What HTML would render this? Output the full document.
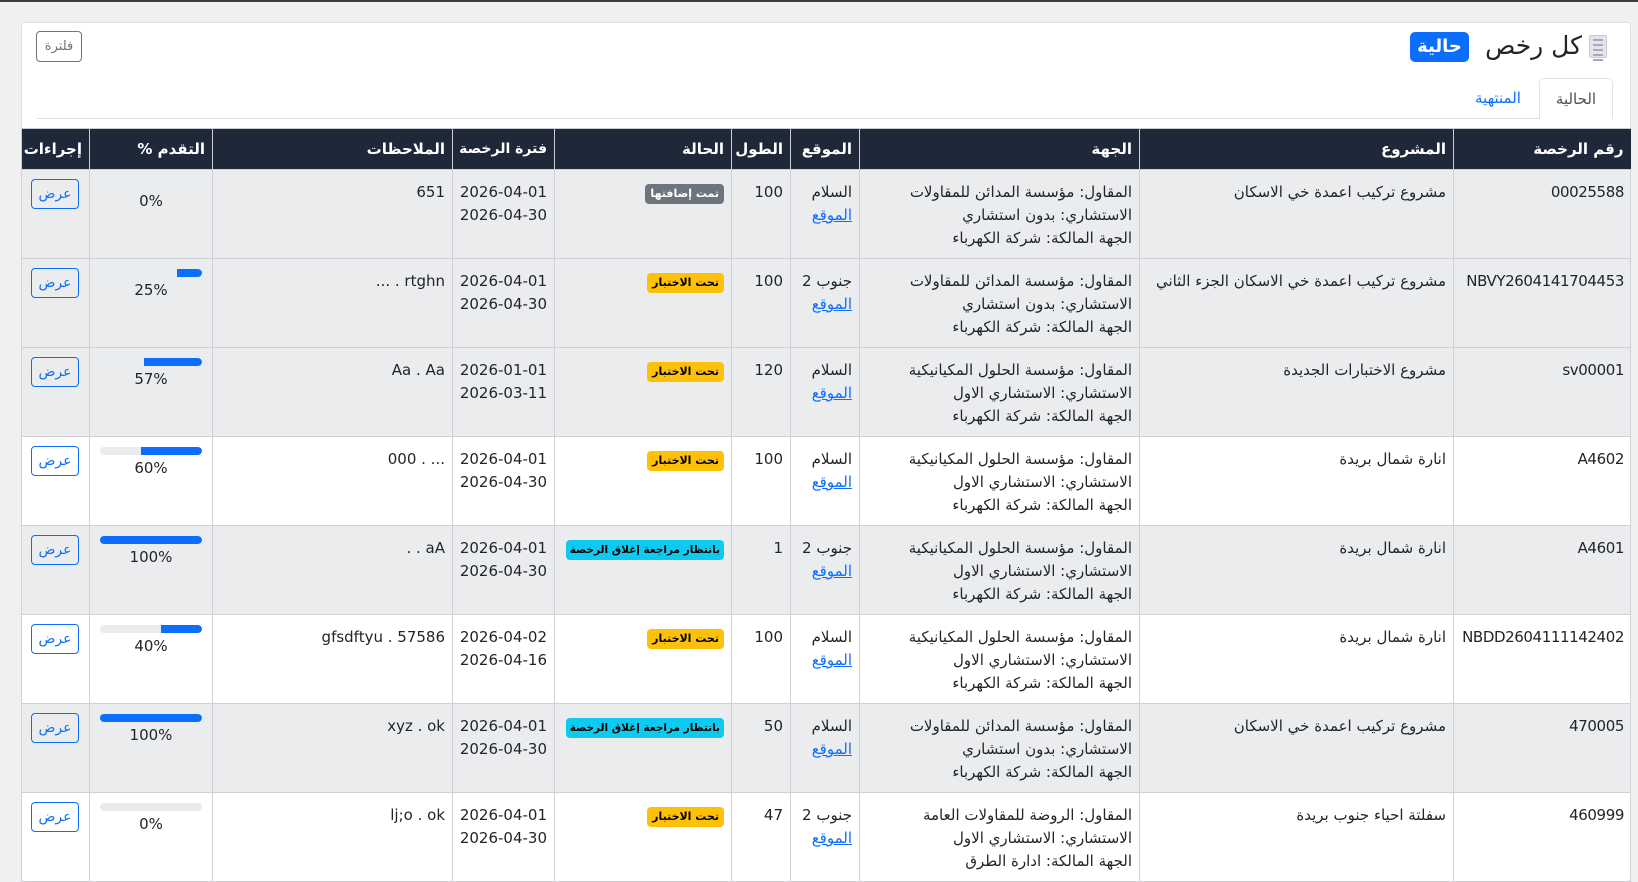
<!DOCTYPE html>
<html dir="rtl"><head><meta charset="utf-8"><style>
*{box-sizing:border-box;margin:0;padding:0}
body{width:1638px;height:865px;overflow:hidden;background:#f0f0f0;font-family:"DejaVu Sans","Liberation Sans",sans-serif;color:#212529;font-size:15px;position:relative}
.topline{position:absolute;left:0;top:0;width:1638px;height:2px;background:#3a3d42}
.card{position:absolute;left:21px;top:22px;width:1610px;height:860px;background:#fff;border:1px solid #dee2e6;border-radius:4px}
.title{position:absolute;right:56px;top:29px;font-size:25px;line-height:34px;color:#212529}
.icon{position:absolute;left:1589px;top:35px;width:18px;height:23px;background:#e4e3ee;border:1px solid #c9c8d9;border-radius:2px}
.icon i{display:block;height:2px;background:#a9a8ba;margin:3px 3px 0}
.hbadge{position:absolute;left:1410px;top:32px;width:59px;height:30px;background:#0d6efd;color:#fff;font-weight:bold;font-size:18px;border-radius:5px;text-align:center;line-height:30px}
.filter{position:absolute;left:36px;top:31px;width:46px;height:31px;border:1px solid #6c757d;border-radius:4px;color:#6c757d;font-size:13px;text-align:center;line-height:29px}
.tabline{position:absolute;left:37px;top:118px;width:1576px;height:1px;background:#dee2e6}
.tab{position:absolute;left:1539px;top:78px;width:74px;height:41px;border:1px solid #dee2e6;border-bottom:1px solid #fff;border-radius:5px 5px 0 0;background:#fff;text-align:center;line-height:40px;font-size:15px;color:#495057}
.tab2{position:absolute;left:1466px;top:78px;width:64px;height:40px;text-align:center;line-height:40px;font-size:15px;color:#0d6efd}
table{position:absolute;left:21px;top:128px;width:1609px;border-collapse:collapse;table-layout:fixed}
th{background:#1f2839;color:#fff;font-weight:bold;font-size:15px;height:41px;text-align:right;padding:0 7px;border-left:1px solid #c9cdd2;border-top:1px solid #c9cdd2;white-space:nowrap;overflow:hidden}
td{height:89px;vertical-align:top;text-align:right;padding:11px 7px 0;border:1px solid #cfd1d4;line-height:23px;font-size:15px;white-space:nowrap;overflow:hidden}
td.n{letter-spacing:-0.4px;padding-right:6px;padding-left:2px}
tr.g td{background:#ebecee}
a{color:#0d6efd;text-decoration:underline}
.b{display:inline-block;font-size:11px;font-weight:bold;border-radius:4px;padding:0 5px;line-height:20px;margin-top:1px}
.bs{background:#6c757d;color:#fff}.bw{background:#ffc107;color:#000}.bi{background:#0dcaf0;color:#000;font-size:10.5px;padding:0 4px}
.pr{height:8px;background:#e9ecef;border-radius:4px;margin:1px 2px 0;position:relative;overflow:hidden}
.pr i{position:absolute;right:0;top:0;height:8px;background:#0d6efd;border-radius:0 4px 4px 0}
.pt{text-align:center;margin-top:2px}
.btn{display:inline-block;width:48px;height:30px;border:1px solid #0d6efd;color:#0d6efd;border-radius:4px;text-align:center;line-height:28px;font-size:14px}
td.ac{padding:9px 2px 0 9px;text-align:left}
td.pc{padding:9px 8px 0}
</style></head><body>
<div class="topline"></div>
<div class="card"></div>
<div class="icon"><i></i><i></i><i></i><i></i><i></i></div>
<div class="title">كل رخص</div>
<div class="hbadge">حالية</div>
<div class="filter">فلترة</div>
<div class="tabline"></div>
<div class="tab">الحالية</div>
<div class="tab2">المنتهية</div>
<table>
<colgroup><col style="width:177px"><col style="width:314px"><col style="width:280px"><col style="width:69px"><col style="width:59px"><col style="width:177px"><col style="width:102px"><col style="width:240px"><col style="width:123px"><col style="width:68px"></colgroup>
<tr><th>رقم الرخصة</th><th>المشروع</th><th>الجهة</th><th>الموقع</th><th>الطول</th><th>الحالة</th><th style="font-size:14px">فترة الرخصة</th><th>الملاحظات</th><th>التقدم %</th><th>إجراءات</th></tr>
<tr class="g"><td class="n">00025588</td><td>مشروع تركيب اعمدة خي الاسكان</td><td>المقاول: مؤسسة المدائن للمقاولات<br>الاستشاري: بدون استشاري<br>الجهة المالكة: شركة الكهرباء</td><td>السلام<br><a>الموقع</a></td><td>100</td><td><span class="b bs">تمت إضافتها</span></td><td>2026-04-01<br>2026-04-30</td><td>651</td><td class="pc"><div class="pr"><i style="width:0"></i></div><div class="pt">0%</div></td><td class="ac"><span class="btn">عرض</span></td></tr>
<tr class="g"><td class="n">NBVY2604141704453</td><td>مشروع تركيب اعمدة خي الاسكان الجزء الثاني</td><td>المقاول: مؤسسة المدائن للمقاولات<br>الاستشاري: بدون استشاري<br>الجهة المالكة: شركة الكهرباء</td><td>جنوب 2<br><a>الموقع</a></td><td>100</td><td><span class="b bw">تحت الاختبار</span></td><td>2026-04-01<br>2026-04-30</td><td><span dir="ltr">... . rtghn</span></td><td class="pc"><div class="pr"><i style="width:25%"></i></div><div class="pt">25%</div></td><td class="ac"><span class="btn">عرض</span></td></tr>
<tr class="g"><td class="n">sv00001</td><td>مشروع الاختبارات الجديدة</td><td>المقاول: مؤسسة الحلول المكيانيكية<br>الاستشاري: الاستشاري الاول<br>الجهة المالكة: شركة الكهرباء</td><td>السلام<br><a>الموقع</a></td><td>120</td><td><span class="b bw">تحت الاختبار</span></td><td>2026-01-01<br>2026-03-11</td><td><span dir="ltr">Aa . Aa</span></td><td class="pc"><div class="pr"><i style="width:57%"></i></div><div class="pt">57%</div></td><td class="ac"><span class="btn">عرض</span></td></tr>
<tr><td class="n">A4602</td><td>انارة شمال بريدة</td><td>المقاول: مؤسسة الحلول المكيانيكية<br>الاستشاري: الاستشاري الاول<br>الجهة المالكة: شركة الكهرباء</td><td>السلام<br><a>الموقع</a></td><td>100</td><td><span class="b bw">تحت الاختبار</span></td><td>2026-04-01<br>2026-04-30</td><td><span dir="ltr">000 . ...</span></td><td class="pc"><div class="pr"><i style="width:60%"></i></div><div class="pt">60%</div></td><td class="ac"><span class="btn">عرض</span></td></tr>
<tr class="g"><td class="n">A4601</td><td>انارة شمال بريدة</td><td>المقاول: مؤسسة الحلول المكيانيكية<br>الاستشاري: الاستشاري الاول<br>الجهة المالكة: شركة الكهرباء</td><td>جنوب 2<br><a>الموقع</a></td><td>1</td><td><span class="b bi">بانتظار مراجعة إغلاق الرخصة</span></td><td>2026-04-01<br>2026-04-30</td><td><span dir="ltr">. . aA</span></td><td class="pc"><div class="pr"><i style="width:100%"></i></div><div class="pt">100%</div></td><td class="ac"><span class="btn">عرض</span></td></tr>
<tr><td class="n">NBDD2604111142402</td><td>انارة شمال بريدة</td><td>المقاول: مؤسسة الحلول المكيانيكية<br>الاستشاري: الاستشاري الاول<br>الجهة المالكة: شركة الكهرباء</td><td>السلام<br><a>الموقع</a></td><td>100</td><td><span class="b bw">تحت الاختبار</span></td><td>2026-04-02<br>2026-04-16</td><td><span dir="ltr">gfsdftyu . 57586</span></td><td class="pc"><div class="pr"><i style="width:40%"></i></div><div class="pt">40%</div></td><td class="ac"><span class="btn">عرض</span></td></tr>
<tr class="g"><td class="n">470005</td><td>مشروع تركيب اعمدة خي الاسكان</td><td>المقاول: مؤسسة المدائن للمقاولات<br>الاستشاري: بدون استشاري<br>الجهة المالكة: شركة الكهرباء</td><td>السلام<br><a>الموقع</a></td><td>50</td><td><span class="b bi">بانتظار مراجعة إغلاق الرخصة</span></td><td>2026-04-01<br>2026-04-30</td><td><span dir="ltr">xyz . ok</span></td><td class="pc"><div class="pr"><i style="width:100%"></i></div><div class="pt">100%</div></td><td class="ac"><span class="btn">عرض</span></td></tr>
<tr><td class="n">460999</td><td>سفلتة احياء جنوب بريدة</td><td>المقاول: الروضة للمقاولات العامة<br>الاستشاري: الاستشاري الاول<br>الجهة المالكة: ادارة الطرق</td><td>جنوب 2<br><a>الموقع</a></td><td>47</td><td><span class="b bw">تحت الاختبار</span></td><td>2026-04-01<br>2026-04-30</td><td><span dir="ltr">lj;o . ok</span></td><td class="pc"><div class="pr"><i style="width:0"></i></div><div class="pt">0%</div></td><td class="ac"><span class="btn">عرض</span></td></tr>
</table>
</body></html>
